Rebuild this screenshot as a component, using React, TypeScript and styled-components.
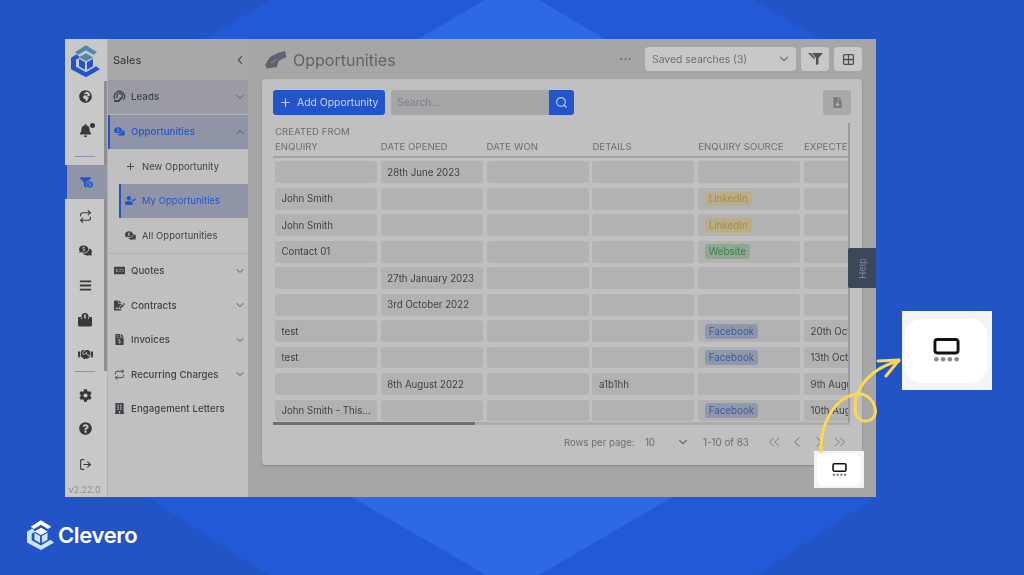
import React from "react";
import styled, { createGlobalStyle } from "styled-components";
import { FaBell, FaFunnelDollar, FaHandshake, FaCog, FaQuestionCircle, FaFileInvoiceDollar, FaFileSignature, FaBuilding, FaCommentsDollar, FaUserCheck, FaBars, FaMoneyCheckAlt, FaFileDownload, FaGlobeAfrica } from "react-icons/fa";
import { FiRepeat, FiChevronDown, FiChevronUp, FiChevronLeft, FiChevronRight, FiChevronsLeft, FiChevronsRight, FiPlus, FiSearch, FiLogOut } from "react-icons/fi";
import { Grid2x2 } from "lucide-react";

const Global = createGlobalStyle`
  html, body { margin: 0; padding: 0; background: #2354c5; }
  body { font-family: Inter, "Liberation Sans", sans-serif; }
  * { box-sizing: border-box; }
`;

const Stage = styled.div`
  position: relative; width: 1024px; height: 575px; overflow: hidden;
  background: #2354c5; padding: 39px 148px 0 65px;
  display: flex; flex-direction: column;
`;
const Backdrop = styled.svg`
  position: absolute; inset: 0; width: 1024px; height: 575px;
`;
const Frame = styled.div`
  position: relative; width: 811px; height: 458px; flex: none; display: flex;
  background: #a6a6a6; overflow: hidden; filter: blur(0.4px);
`;
const Rail = styled.nav`
  width: 42px; flex: none; background: #c8c8c8; display: flex; flex-direction: column; align-items: center;
  position: relative;
`;
const RailThumb = styled.div`
  position: absolute; top: 42px; left: 39px; width: 3px; height: 290px; background: #8f8f8f;
`;
const RailLogo = styled.div`height: 41px; flex: none; display: flex; align-items: center; justify-content: center; padding-top: 3px;`;
const RailItem = styled.div<{ $active?: boolean; $h?: number }>`
  position: relative; width: 100%; height: ${(p) => p.$h ?? 34.4}px; flex: none; display: flex; align-items: center; justify-content: center;
  color: #37393d; font-size: 13px;
  padding-right: 2px;
  ${(p) => p.$active && "background: #8f94a6; border-left: 2px solid #2355c8; color: #2355c8;"}
`;
const BellDot = styled.span`
  position: absolute; top: 10px; left: 25px; width: 5px; height: 5px; border-radius: 50%; background: #37393d;
`;
const RailRule = styled.div<{ $top: number; $bottom: number }>`
  width: 20px; height: 1px; background: #8a93b3; flex: none; margin: ${(p) => p.$top}px 3px ${(p) => p.$bottom}px 0;
`;
const Version = styled.div`
  margin-top: auto; font-size: 9px; line-height: 14px; color: #8c8c8c; height: 14px; padding-right: 3px;
`;
const Side = styled.aside`
  width: 141px; flex: none; background: #c0c0c0; border-left: 1px solid #b0b0b0; display: flex; flex-direction: column;
`;
const SideHead = styled.div`
  height: 41px; flex: none; background: #a9a9a9; display: flex; align-items: center; justify-content: space-between;
  padding: 0 1px 0 5px; font-size: 11px; font-weight: 500; color: #3d3f44;
`;
const Row = styled.div<{ $kind?: "group" | "open" | "sub" | "subActive" }>`
  height: 34.5px; flex: none; display: flex; align-items: center; gap: 5px;
  font-size: 9.6px; font-weight: 500; letter-spacing: 0.1px; color: #3d4148; padding: 0 2px 0 5px;
  ${(p) => p.$kind === "group" && "background: #9a9ba5; border-bottom: 1px solid #b4b4b4;"}
  ${(p) => p.$kind === "open" && "background: #8f94a6; color: #2355c8; border-left: 2px solid #2355c8; padding-left: 3px;"}
  ${(p) => p.$kind === "sub" && "padding-left: 16px; font-weight: 400; font-size: 9.4px;"}
  ${(p) => p.$kind === "subActive" && "margin-left: 11px; padding-left: 3px; border-left: 2px solid #2355c8; background: #8f94a6; color: #2355c8; font-weight: 400; font-size: 9.4px;"}
`;
const RowIcon = styled.span`
  width: 13px; height: 13px; flex: none; display: flex; align-items: center; justify-content: center; font-size: 11px;
`;
const Grow = styled.span`flex: 1; white-space: nowrap;`;
const Divider = styled.div`height: 1px; background: #b0b0b0; flex: none;`;
const Chevron = styled.span`display: flex; font-size: 12px; color: #555;`;
const Main = styled.main`
  flex: 1; min-width: 0; display: flex; flex-direction: column; padding: 5px 14px 0 14px;
`;
const Top = styled.div`height: 30px; flex: none; display: flex; align-items: center;`;
const TitleIcon = styled.span`display: flex; width: 24px; margin-left: 3px; margin-right: 4px;`;
const Title = styled.h1`margin: 0; font-size: 16px; font-weight: 400; color: #5c6470; line-height: 24px; padding-top: 2px;`;
const Dots = styled.span`margin-left: auto; margin-right: 13px; font-size: 11px; font-weight: 700; color: #55585e; letter-spacing: 0.5px; line-height: 8px; padding-bottom: 6px;`;
const SavedSelect = styled.div`
  width: 151px; height: 24px; border-radius: 4px; background: #c8c8c8; display: flex; align-items: center;
  justify-content: space-between; padding: 0 5px 0 7px; font-size: 10.4px; color: #6d6f73;
`;
const ToolBtn = styled.div`
  width: 28px; height: 24px; margin-left: 5px; border-radius: 4px; background: #c8c8c8; display: flex; align-items: center; justify-content: center;
  color: #4e5258;
`;
const Card = styled.section`
  position: relative; margin-top: 5px; width: 600px; height: 386px; flex: none; border-radius: 4px; background: #c0c0c0;
  box-shadow: 0 1px 2px rgba(0,0,0,.2); padding: 11px 11px 0 11px; display: flex; flex-direction: column;
`;
const Actions = styled.div`display: flex; height: 25px; flex: none;`;
const AddBtn = styled.div`
  width: 112px; height: 25px; border-radius: 3px; background: #2355c8; color: #c8d2ea; font-size: 10.4px;
  display: flex; align-items: center; gap: 5px; padding-left: 6px; white-space: nowrap;
`;
const Search = styled.div`
  width: 158px; margin-left: 6px; height: 25px; background: #a5a6a8; border-radius: 3px 0 0 3px; color: #7c7e84;
  font-size: 10.4px; display: flex; align-items: center; padding-left: 6px;
`;
const SearchBtn = styled.div`
  width: 25px; height: 25px; background: #2355c8; color: #c8d2ea; border-radius: 0 3px 3px 0; display: flex; align-items: center; justify-content: center; font-size: 13px;
`;
const DocBtn = styled.div`
  margin-left: auto; width: 28px; height: 25px; background: #a9a9a9; color: #7a7a7a; border-radius: 3px; display: flex; align-items: center; justify-content: center; font-size: 11px;
`;
const TableArea = styled.div`
  position: relative; margin-top: 8px; width: 577px; height: 302px; overflow: hidden; flex: none;
`;
const HeadRow = styled.div`
  display: grid; grid-template-columns: repeat(6, 102px); column-gap: 3.8px; padding-left: 2px; height: 35px; border-bottom: 2px solid #a3a3a3; align-items: end; padding-bottom: 2px;
`;
const HeadCell = styled.div`font-size: 9.6px; line-height: 15px; color: #6c6e72; white-space: nowrap; letter-spacing: 0.05px;`;
const BodyRow = styled.div`
  display: grid; grid-template-columns: repeat(6, 102px); column-gap: 3.8px; padding-left: 2px; margin-top: 3.3px; height: 23.2px;
  &:first-of-type { margin-top: 3px; }
`;
const Cell = styled.div`
  height: 21.8px; background: #b2b2b2; border-radius: 3px; padding-left: 6.5px; display: flex; align-items: center;
  font-size: 9.7px; color: #3f4146; white-space: nowrap; overflow: hidden;
`;
const Tag = styled.span<{ $bg: string; $fg: string }>`
  background: ${(p) => p.$bg}; color: ${(p) => p.$fg}; border-radius: 3px; height: 15px; line-height: 15px; padding: 0 4px; font-size: 9.8px;
`;
const VScroll = styled.div`
  position: absolute; right: 0; top: 0; width: 2px; height: 100%; background: #9c9c9c;
`;
const HTrack = styled.div`
  position: absolute; left: 0; bottom: 0; width: 577px; height: 3px; background: #adadad;
`;
const HThumb = styled.div`width: 202px; height: 3px; background: #707070;`;
const Pager = styled.div`
  display: flex; align-items: center; height: 30px; margin-top: 2px; padding-left: 291px; font-size: 9.6px; color: #6b6d72; white-space: nowrap;
`;
const PerPage = styled.span`width: 82px;`;
const PerValue = styled.span`width: 32px; color: #6b6d72; font-size: 9.8px;`;
const PagerChevron = styled.span`display: flex; width: 27px; color: #6b6d72;`;
const Range = styled.span`width: 63px; font-size: 9.8px;`;
const PagerIcon = styled.span<{ $w: number }>`display: flex; width: ${(p) => p.$w}px; color: #858585;`;
const HelpTab = styled.div`
  position: absolute; right: 0; top: 209px; width: 28px; height: 40px; background: #3c4859; border-radius: 2px 0 0 2px;
  display: flex; align-items: center; justify-content: center; color: #808896; font-size: 9.5px;
`;
const HelpText = styled.span`transform: rotate(-90deg); display: block;`;
const Footer = styled.div`
  position: relative; margin: 22px 0 0 -38px; height: 32px; display: flex; align-items: center; gap: 3px; color: #fff;
`;
const Brand = styled.span`font-size: 22px; font-weight: 600; letter-spacing: -0.35px; color: #fff;`;
const SmallHighlight = styled.div`
  position: absolute; left: 814px; top: 451px; width: 50px; height: 37px; background: #f4f4f4; display: flex; align-items: center; justify-content: center; padding: 2px 3px;
`;
const HighlightInner = styled.div<{ $r: number }>`
  width: 100%; height: 100%; background: #fff; border-radius: ${(p) => p.$r}px; display: flex; align-items: center; justify-content: center;
`;
const BigHighlight = styled.div`
  position: absolute; left: 902px; top: 311px; width: 90px; height: 79px; background: #f4f4f4; padding: 8px 5px 7px 3px;
`;
const Curve = styled.svg`position: absolute; inset: 0; width: 1024px; height: 575px; pointer-events: none;`;

const Mark = ({ size, top, left, front }: { size: number; top: string; left: string; front: string }) => (
  <svg width={size} height={size * 1.08} viewBox="0 0 30 32" fill="none">
    <path d="M4 7 L15 0 L26 7 L22.5 9.5 L15 5 L7.5 9.5 Z" fill={top} />
    <path d="M5.5 9 L0 12.5 V24 L15 32 L29 24 L25 21 L15 27 L5 21.5 V14.5 L9 12 Z" fill={left} />
    <path d="M15 8 L22 12 L15 16 L8 12 Z" fill={front} />
    <path d="M8 13.5 L14 17 V24.5 L8 21 Z" fill={left} />
    <path d="M16 17 L22 13.5 V21 L16 24.5 Z" fill={left} />
  </svg>
);

const Switcher = ({ w }: { w: number }) => (
  <svg width={w} height={(w * 26) / 28} viewBox="0 0 28 26" fill="none">
    <rect x="2" y="1.5" width="24" height="14" rx="2.5" stroke="#111" strokeWidth="3" fill="#fff" />
    {[4, 11, 18, 25].map((x) => (
      <circle key={x} cx={x - 0.5} cy="22" r="2.4" fill="#8a8a8a" />
    ))}
  </svg>
);

const LeadIcon = () => (
  <svg width="13" height="13" viewBox="0 0 14 14" fill="none" stroke="#3d4148" strokeWidth="1.4" strokeLinecap="round">
    <path d="M2 9.5A5.5 5.5 0 1 1 11.5 10" />
    <path d="M4.5 8A3 3 0 1 1 9 9" />
    <path d="M2 12h4l3-3.5" strokeWidth="2" />
  </svg>
);
const CashBoxIcon = () => (
  <svg width="16" height="15" viewBox="0 0 16 15" fill="#37393d">
    <path d="M2 5h2v2h8V5h2a1 1 0 0 1 1 1v7a1.5 1.5 0 0 1-1.5 1.5h-11A1.5 1.5 0 0 1 1 13V6a1 1 0 0 1 1-1z" />
    <circle cx="8" cy="4.5" r="3.5" />
    <rect x="7.2" y="2.5" width="1.6" height="4" fill="#c8c8c8" />
  </svg>
);
const TitleGlyph = () => (
  <svg width="22" height="19" viewBox="0 0 22 19" fill="#5b6470">
    <path d="M0 15 L5 7 L13 3 L20 1 L21.5 7 L13.5 11 L12 17 L2 18.5 Z" />
    <path d="M6 13 L12 9" stroke="#8a8f98" strokeWidth="1" />
  </svg>
);
const StackedFunnel = () => (
  <svg width="15" height="12" viewBox="0 0 15 12" fill="#4e5258">
    <path d="M4 0h11L10.5 5v6L8 12V5z" />
    <path d="M0 0h3l3.5 4.5v2z" />
  </svg>
);

const rows: [string, string, string, string, string, string][] = [
  ["", "28th June 2023", "", "", "", ""],
  ["John Smith", "", "", "", "LinkedIn", ""],
  ["John Smith", "", "", "", "LinkedIn", ""],
  ["Contact 01", "", "", "", "Website", ""],
  ["", "27th January 2023", "", "", "", ""],
  ["", "3rd October 2022", "", "", "", ""],
  ["test", "", "", "", "Facebook", "20th October 2022"],
  ["test", "", "", "", "Facebook", "13th October 2022"],
  ["", "8th August 2022", "", "a1b1hh", "", "9th August 2022"],
  ["John Smith - This...", "", "", "", "Facebook", "10th August 2022"],
];
const tagStyle: Record<string, { bg: string; fg: string }> = {
  LinkedIn: { bg: "#b9ad8b", fg: "#a68d3f" },
  Website: { bg: "#8ea891", fg: "#3f7a4e" },
  Facebook: { bg: "#8f97ad", fg: "#3f5a9a" },
};

export default function App() {
  return (
    <Stage>
      <Global />
      <Backdrop viewBox="0 0 1024 575">
        <polygon points="270,0 754,0 820,39 875,39 875,497 757,575 268,575 147,497 148,39 204,39" fill="#2259d6" />
        <polygon points="485,0 539,0 605,39 418,39" fill="#2c69e2" />
        <polygon points="351,497 673,497 539,575 486,575" fill="#2c69e2" />
      </Backdrop>
      <Frame>
        <Rail>
          <RailThumb />
          <RailLogo><Mark size={30} top="#4f87a8" left="#2355c8" front="#4f87a8" /></RailLogo>
          <RailItem $h={33}><FaGlobeAfrica /></RailItem>
          <RailItem $h={34}><FaBell /><BellDot /></RailItem>
          <RailRule $top={9} $bottom={8} />
          <RailItem $active><FaFunnelDollar /></RailItem>
          <RailItem><FiRepeat /></RailItem>
          <RailItem><FaCommentsDollar /></RailItem>
          <RailItem><FaBars /></RailItem>
          <RailItem><CashBoxIcon /></RailItem>
          <RailItem><FaHandshake size={15} /></RailItem>
          <RailRule $top={0} $bottom={8} />
          <RailItem $h={31}><FaCog /></RailItem>
          <RailItem $h={35}><FaQuestionCircle /></RailItem>
          <RailItem $h={36}><FiLogOut /></RailItem>
          <Version>v2.22.0</Version>
        </Rail>
        <Side>
          <SideHead>Sales <Chevron><FiChevronLeft size={14} /></Chevron></SideHead>
          <Row $kind="group"><RowIcon><LeadIcon /></RowIcon><Grow>Leads</Grow><Chevron><FiChevronDown /></Chevron></Row>
          <Row $kind="open"><RowIcon><FaCommentsDollar /></RowIcon><Grow>Opportunities</Grow><Chevron><FiChevronUp /></Chevron></Row>
          <Row $kind="sub"><RowIcon><FiPlus /></RowIcon><Grow>New Opportunity</Grow></Row>
          <Row $kind="subActive"><RowIcon><FaUserCheck /></RowIcon><Grow>My Opportunities</Grow></Row>
          <Row $kind="sub"><RowIcon><FaCommentsDollar /></RowIcon><Grow>All Opportunities</Grow></Row>
          <Divider />
          <Row><RowIcon><FaMoneyCheckAlt /></RowIcon><Grow>Quotes</Grow><Chevron><FiChevronDown /></Chevron></Row>
          <Row><RowIcon><FaFileSignature /></RowIcon><Grow>Contracts</Grow><Chevron><FiChevronDown /></Chevron></Row>
          <Row><RowIcon><FaFileInvoiceDollar /></RowIcon><Grow>Invoices</Grow><Chevron><FiChevronDown /></Chevron></Row>
          <Row><RowIcon><FiRepeat /></RowIcon><Grow>Recurring Charges</Grow><Chevron><FiChevronDown /></Chevron></Row>
          <Row><RowIcon><FaBuilding /></RowIcon><Grow>Engagement Letters</Grow></Row>
        </Side>
        <Main>
          <Top>
            <TitleIcon><TitleGlyph /></TitleIcon>
            <Title>Opportunities</Title>
            <Dots>...</Dots>
            <SavedSelect>Saved searches (3) <FiChevronDown size={14} /></SavedSelect>
            <ToolBtn><StackedFunnel /></ToolBtn>
            <ToolBtn><Grid2x2 size={13} strokeWidth={2.4} /></ToolBtn>
          </Top>
          <Card>
            <Actions>
              <AddBtn><FiPlus size={13} />Add Opportunity</AddBtn>
              <Search>Search...</Search>
              <SearchBtn><FiSearch /></SearchBtn>
              <DocBtn><FaFileDownload /></DocBtn>
            </Actions>
            <TableArea>
              <HeadRow>
                <HeadCell>CREATED FROM<br />ENQUIRY</HeadCell>
                <HeadCell>DATE OPENED</HeadCell>
                <HeadCell>DATE WON</HeadCell>
                <HeadCell>DETAILS</HeadCell>
                <HeadCell>ENQUIRY SOURCE</HeadCell>
                <HeadCell>EXPECTED CLOSE</HeadCell>
              </HeadRow>
              {rows.map((r, i) => (
                <BodyRow key={i}>
                  {r.map((c, j) => (
                    <Cell key={j}>{tagStyle[c] ? <Tag $bg={tagStyle[c].bg} $fg={tagStyle[c].fg}>{c}</Tag> : c}</Cell>
                  ))}
                </BodyRow>
              ))}
              <VScroll />
              <HTrack><HThumb /></HTrack>
            </TableArea>
            <Pager>
              <PerPage>Rows per page:</PerPage>
              <PerValue>10</PerValue>
              <PagerChevron><FiChevronDown size={14} /></PagerChevron>
              <Range>1-10 of 83</Range>
              <PagerIcon $w={23}><FiChevronsLeft size={18} strokeWidth={1.4} /></PagerIcon>
              <PagerIcon $w={22}><FiChevronLeft size={18} strokeWidth={1.4} /></PagerIcon>
              <PagerIcon $w={22}><FiChevronRight size={18} strokeWidth={1.4} /></PagerIcon>
              <PagerIcon $w={20}><FiChevronsRight size={18} strokeWidth={1.4} /></PagerIcon>
            </Pager>
          </Card>
        </Main>
        <HelpTab><HelpText>Help</HelpText></HelpTab>
      </Frame>
      <Footer>
        <Mark size={28} top="#ffffff" left="#cfe3fb" front="#ffffff" />
        <Brand>Clevero</Brand>
      </Footer>
      <SmallHighlight><HighlightInner $r={7}><Switcher w={15} /></HighlightInner></SmallHighlight>
      <BigHighlight><HighlightInner $r={16}><Switcher w={27} /></HighlightInner></BigHighlight>
      <Curve viewBox="0 0 1024 575" fill="none">
        <path d="M821 452 C820 420 838 394 860 394 C876 395 882 420 866 421 C852 422 852 400 862 385 C870 374 882 365 899 361" stroke="#fdd74f" strokeWidth="3" strokeLinecap="round" />
        <path d="M878 361 L899 360 L886 376" stroke="#fdd74f" strokeWidth="3" strokeLinecap="round" strokeLinejoin="round" />
      </Curve>
    </Stage>
  );
}
